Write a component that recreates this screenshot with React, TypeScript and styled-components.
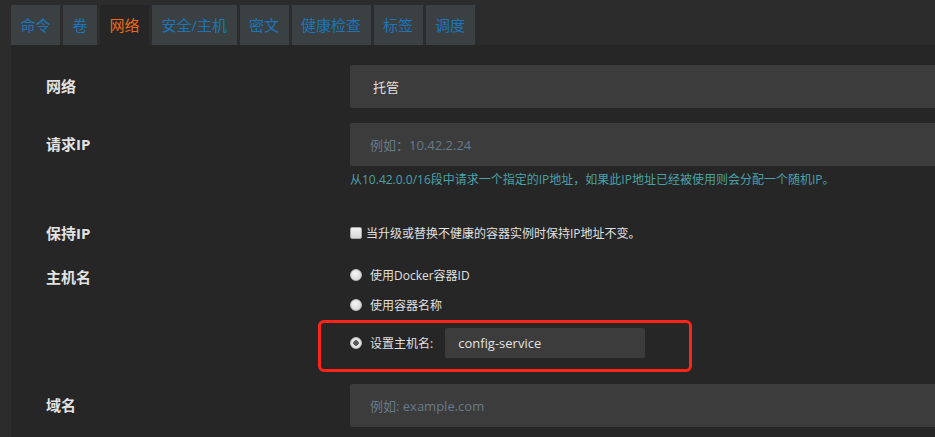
import React from "react";
import styled, { createGlobalStyle } from "styled-components";

const Global = createGlobalStyle`
  html, body { margin: 0; padding: 0; background: #2c2c2c; }
  body { font-family: "Open Sans", "Noto Sans CJK SC", sans-serif; }
  * { box-sizing: border-box; }
`;

const Page = styled.div`
  padding: 5px 0 0 11px;
  height: 437px;
  overflow: hidden;
`;

const TabBar = styled.div`
  display: flex;
  gap: 3px;
  height: 40px;
`;

const Tab = styled.div<{ $active?: boolean }>`
  display: flex;
  align-items: center;
  padding: 0 9.5px 2px;
  font-size: 15px;
  color: ${(p) => (p.$active ? "#ea6a1c" : "#1c74b9")};
  background: ${(p) => (p.$active ? "#262626" : "#3b4043")};
  white-space: nowrap;
`;

const Panel = styled.div`
  background: #262626;
  padding: 20px 0 20px 35px;
  height: 392px;
`;

const Row = styled.div<{ $mt?: number }>`
  display: grid;
  grid-template-columns: 304px 1fr;
  margin-top: ${(p) => p.$mt ?? 0}px;
`;

const Label = styled.div<{ $lh: number }>`
  font-size: 15px;
  font-weight: 700;
  color: #e2e2e2;
  line-height: ${(p) => p.$lh}px;
`;

const Field = styled.div`
  display: flex;
  flex-direction: column;
`;

const Input = styled.div<{ $pl?: number; $placeholder?: boolean }>`
  height: 43px;
  background: #3c3c3c;
  border-radius: 2px 0 0 2px;
  display: flex;
  align-items: center;
  padding-left: ${(p) => p.$pl ?? 20}px;
  font-size: 13px;
  color: ${(p) => (p.$placeholder ? "#66798a" : "#dedede")};
`;

const Help = styled.div`
  margin-top: 6px;
  font-size: 12px;
  line-height: 16px;
  color: #4aa2a6;
`;

const CheckLine = styled.label`
  display: flex;
  align-items: center;
  height: 20px;
  font-size: 12px;
  color: #e0e0e0;
`;

const CheckBox = styled.span`
  width: 12px;
  height: 12px;
  margin-right: 4px;
  background: linear-gradient(#f2f2f2, #d8d8d8);
  border: 1px solid #a8a8a8;
  border-radius: 2px;
`;

const Options = styled.div`
  display: flex;
  flex-direction: column;
`;

const Option = styled.div<{ $h: number; $mt?: number }>`
  position: relative;
  display: flex;
  align-items: center;
  height: ${(p) => p.$h}px;
  margin-top: ${(p) => p.$mt ?? 0}px;
  font-size: 12px;
  color: #e0e0e0;
`;

const Radio = styled.span<{ $checked?: boolean }>`
  width: 12px;
  height: 12px;
  margin-right: 8px;
  border-radius: 50%;
  background: ${(p) =>
    p.$checked
      ? "radial-gradient(circle, #5a5a5a 0 2.5px, #e6e6e6 3px)"
      : "radial-gradient(circle at 40% 35%, #f4f4f4, #d2d2d2)"};
  border: 1px solid #bdbdbd;
`;

const SmallInput = styled.div`
  margin-left: 12px;
  width: 200px;
  height: 30px;
  background: #3c3c3c;
  border-radius: 2px;
  display: flex;
  align-items: center;
  padding-left: 13px;
  font-size: 13px;
  color: #e2e2e2;
`;

const Highlight = styled.div`
  position: absolute;
  left: -32px;
  top: -8px;
  width: 374px;
  height: 52px;
  border: 3px solid #ff2418;
  border-radius: 6px;
  pointer-events: none;
`;

const tabs = ["命令", "卷", "网络", "安全/主机", "密文", "健康检查", "标签", "调度"];

export default function App() {
  return (
    <>
      <Global />
      <Page>
        <TabBar>
          {tabs.map((t) => (
            <Tab key={t} $active={t === "网络"}>
              {t}
            </Tab>
          ))}
        </TabBar>
        <Panel>
          <Row>
            <Label $lh={43}>网络</Label>
            <Input $pl={23}>托管</Input>
          </Row>
          <Row $mt={15}>
            <Label $lh={43}>请求IP</Label>
            <Field>
              <Input $placeholder>例如：10.42.2.24</Input>
              <Help>从10.42.0.0/16段中请求一个指定的IP地址，如果此IP地址已经被使用则会分配一个随机IP。</Help>
            </Field>
          </Row>
          <Row $mt={35}>
            <Label $lh={20}>保持IP</Label>
            <CheckLine>
              <CheckBox />
              当升级或替换不健康的容器实例时保持IP地址不变。
            </CheckLine>
          </Row>
          <Row $mt={22}>
            <Label $lh={24}>主机名</Label>
            <Options>
              <Option $h={20}>
                <Radio />
                使用Docker容器ID
              </Option>
              <Option $h={20} $mt={10}>
                <Radio />
                使用容器名称
              </Option>
              <Option $h={30} $mt={13}>
                <Radio $checked />
                设置主机名:
                <SmallInput>config-service</SmallInput>
                <Highlight />
              </Option>
            </Options>
          </Row>
          <Row $mt={26}>
            <Label $lh={43}>域名</Label>
            <Input $placeholder>例如: example.com</Input>
          </Row>
        </Panel>
      </Page>
    </>
  );
}
